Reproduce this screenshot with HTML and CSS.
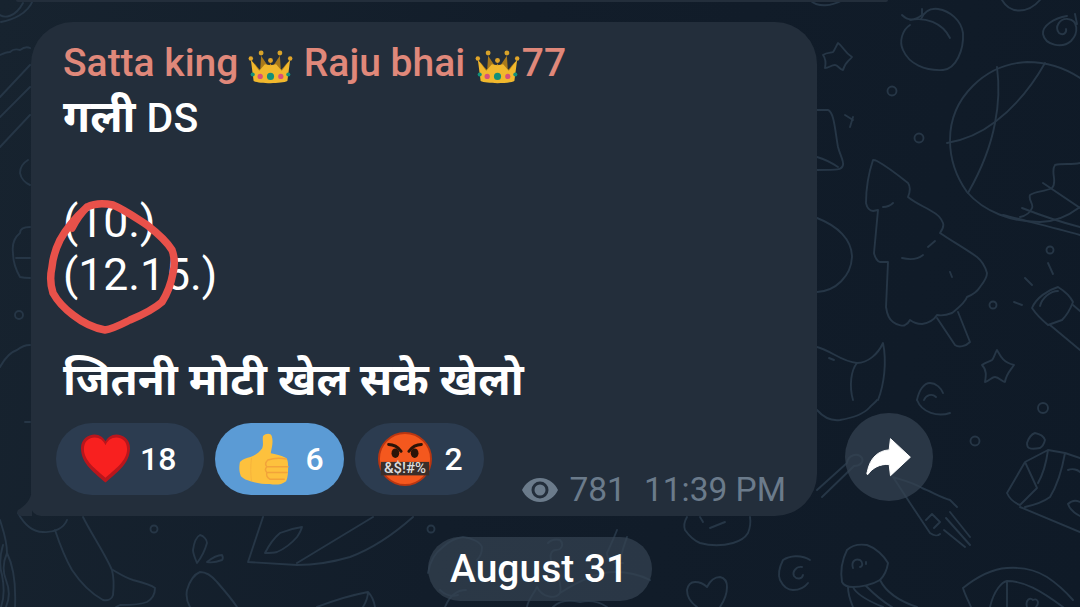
FILE: index.html
```html
<!DOCTYPE html>
<html lang="en">
<head>
  <meta charset="UTF-8" />
  <title>Channel post</title>
  <link rel="stylesheet" href="styles.css">
</head>
<body>
  <svg class="doodles" viewBox="0 0 1080 607" fill="none">
    <g stroke="#263646" stroke-width="1.9" stroke-linecap="round" stroke-linejoin="round">
      <!-- peach -->
      <path d="M910 25C902 30 899 42 903 50C909 64 925 71 943 70C956 69 964 50 963 33C961 20 950 11 938 9C930 8 924 12 921 19"/>
      <path d="M902 15C908 21 914 21 922 15L922 9M910 20C925 17 942 22 950 38"/>
      <path d="M1 22C12 20 28 14 33 0M1 0"/>
      <path d="M810 0C818 8 832 6 843 0M1 0"/>
      <path d="M1002 0C1010 14 1028 14 1040 0"/>
      <!-- spirals, top right -->
      <path d="M1067 16C1054 18 1042 26 1043 34C1045 45 1062 49 1071 41C1079 33 1078 20 1068 19C1060 18 1054 27 1059 33C1063 36 1067 33 1066 29M1075 14L1077 24"/>
      <!-- star -->
      <path d="M838 43C843 46 844 52 852 57C848 62 845 62 843 70C840 70 838 65 835 65C831 65 829 68 825 68C826 63 826 59 823 55C827 52 831 53 833 52C835 50 836 46 838 43Z"/>
      <circle cx="892" cy="91" r="4.5"/>
      <circle cx="919" cy="138" r="4.5"/>
      <!-- bell -->
      <path d="M817 110H828C834 112 835 130 838 147C840 155 844 161 843 165C842 170 838 170 817 170M817 157C824 159 832 163 838 167M845 115L853 120M850 127L853 117"/>
      <path d="M817 218C838 226 852 240 852 257C851 276 836 291 817 292"/>
      <!-- planet -->
      <path d="M1080 78C1062 66 1044 62 1027 62C985 64 950 98 950 140C950 160 957 178 967 192C984 212 1012 222 1040 222C1054 222 1068 216 1080 207"/>
      <path d="M947 143C965 140 982 132 995 122C1016 106 1032 86 1045 63"/>
      <path d="M997 67C1000 90 998 108 995 123C990 150 980 172 968 193"/>
      <path d="M1080 163C1072 165 1062 163 1055 165C1050 172 1058 182 1052 188C1044 192 1036 191 1030 195C1028 200 1034 204 1032 208C1030 213 1025 216 1020 217"/>
      <path d="M1043 183L1080 208M1022 208C1040 215 1060 222 1080 227M1003 215C1030 222 1055 228 1080 235"/>
      <!-- tree -->
      <path d="M873 160C869 172 866 188 866 203C867 208 870 211 873 211L878 210L874 253C875 258 878 262 880 262H888L886 307C887 314 890 320 893 322C898 326 904 326 905 325C907 324 909 322 910 320C914 323 918 324 922 324C928 323 934 320 937 315C942 316 947 315 952 313C958 308 965 303 967 297C972 295 977 292 980 287C984 282 987 278 987 273C985 266 982 261 977 257C966 249 950 240 940 233C943 229 944 226 943 223C941 218 937 214 933 212C925 207 915 203 908 197C910 192 911 187 908 183C898 175 888 167 877 161C875 160 874 160 873 160Z"/>
      <path d="M883 207C887 207 890 206 893 203M902 258C910 260 918 259 923 255M928 247L935 241M950 272L952 277"/>
      <path d="M937 318L955 345C959 348 966 346 970 342L958 312"/>
      <!-- dots and telescope -->
      <circle cx="1050" cy="250" r="3.5"/>
      <circle cx="993" cy="305" r="3.5"/>
      <path d="M1048 263L1053 274M1025 278L1032 285M1014 302L1022 305"/>
      <path d="M1032 308C1036 298 1048 290 1058 287C1066 292 1070 296 1073 302C1070 310 1066 316 1062 320L1048 325C1042 320 1036 314 1032 308Z"/>
      <path d="M1040 306C1042 298 1050 291 1058 291M1050 325L1080 350M1073 305L1080 311"/>
      <!-- lower star -->
      <path d="M997 350C1000 355 1002 362 1014 365C1010 371 1006 374 1005 382C1002 382 999 377 995 377C992 377 989 381 985 382C986 376 987 370 982 365C986 362 989 362 992 360C994 358 995 353 997 350Z"/>
      <!-- moon -->
      <path d="M817 347C830 350 842 362 857 363C868 363 878 354 883 343C887 362 884 385 878 400M857 363C851 370 849 386 853 400M829 358L834 360"/>
      <path d="M917 400C919 390 924 383 930 383C936 383 941 388 943 393M924 400C926 395 932 393 936 397"/>
      <!-- arcs under -->
      <path d="M817 410C824 418 832 421 840 420C852 418 864 414 870 407C873 404 876 402 877 400M917 400C922 413 938 417 950 413"/>
      <!-- bone and brush behind the button -->
      <path d="M817 490L847 463C848 455 858 452 862 458C864 462 860 466 854 466L822 497"/>
      <path d="M893 477C902 480 912 482 922 488C932 492 942 498 950 500L957 507M910 503L930 533C934 536 938 536 940 534M893 477L910 503M950 512L970 537M946 518L970 545M944 530L965 547M926 520L932 514L940 522L934 528"/>
      <!-- box on the right -->
      <path d="M1007 493L1025 462L1048 450L1065 453L1080 458M1007 493C1010 500 1015 503 1020 505L1037 488L1025 462M1020 507L1080 532M1065 453C1062 470 1058 484 1050 497C1042 503 1034 505 1025 507M1048 450C1046 465 1042 476 1038 483"/>
      <path d="M1027 443C1029 437 1032 434 1035 433C1040 434 1044 437 1045 440C1044 444 1042 447 1040 448C1035 449 1031 449 1029 448C1027 447 1027 445 1027 443Z"/>
      <circle cx="1043" cy="408" r="5"/>
      <circle cx="975" cy="441" r="4.5"/>
      <path d="M1068 470C1073 468 1078 470 1080 472M1068 504C1072 500 1076 500 1080 502M1068 504C1070 510 1076 514 1080 516"/>
      <!-- pizza -->
      <path d="M963 588C978 576 992 569 1007 568C1022 567 1036 570 1047 577C1056 583 1066 592 1073 600M963 588C965 595 968 600 971 607M990 607C994 590 1002 582 1007 581C1024 581 1040 590 1063 607M1007 581V607"/>
      <path d="M1027 607C1025 600 1030 597 1033 600C1037 598 1040 602 1036 607"/>
      <!-- jellyfish and spiral -->
      <path d="M842 582C840 570 843 558 847 550C852 545 860 544 867 545C876 548 884 556 888 563C887 570 884 576 880 580C872 585 860 587 853 587C848 587 844 586 842 582Z"/>
      <path d="M853 587C856 594 866 600 883 607M866 586C872 592 880 600 892 607M880 580C885 590 896 600 917 607M848 587C848 594 850 600 853 607"/>
      <path d="M853 568C851 562 855 558 860 560C863 562 863 566 860 567M866 562V564"/>
      <path d="M810 560C801 554 789 556 783 560C779 568 778 575 780 580C783 586 788 590 793 590C800 590 805 587 808 583M802 567C796 566 792 572 794 576C797 580 802 579 803 575"/>
      <!-- heart and hat below the bubble -->
      <path d="M697 607C690 602 687 596 687 590C688 585 691 582 695 582C700 582 704 584 707 587C710 581 715 577 720 577C725 578 727 582 727 587C727 594 724 601 720 607"/>
      <path d="M687 517C684 522 684 527 685 530C690 537 695 541 700 543C711 546 722 546 733 543C740 541 745 538 748 533C750 528 751 523 750 517M710 528L725 522M700 517L703 522"/>
      <!-- bottom left -->
      <path d="M18 513C24 524 33 532 43 532C54 533 64 528 67 520M55 530C60 545 65 558 72 570C80 582 92 594 103 600C108 601 112 599 113 595C114 586 114 578 112 570C104 552 92 535 83 517"/>
      <path d="M113 570C120 574 126 578 133 580C141 582 150 584 155 588C155 594 152 599 147 602C140 605 130 605 120 605L116 607"/>
      <circle cx="154" cy="529" r="3.5"/>
      <path d="M200 535C204 536 207 540 207 543C205 550 201 558 197 563C195 558 193 554 193 550C194 543 196 537 200 535ZM207 562C212 558 217 555 222 555C223 557 223 559 222 560C217 562 212 563 207 562Z"/>
      <path d="M190 607C186 600 186 595 187 590C190 580 195 574 200 572C206 572 212 576 217 582C224 590 231 598 237 607"/>
      <path d="M263 517L248 562L297 565C315 565 333 562 350 557C374 548 395 533 413 517M297 563C323 547 348 532 373 517"/>
      <path d="M265 553C269 545 274 538 280 533C287 530 295 528 302 527C301 531 299 534 297 537C291 544 284 549 277 552C273 553 269 553 265 553Z"/>
      <circle cx="431" cy="529" r="3.5"/>
      <path d="M317 607C335 600 352 595 368 592C372 596 374 601 375 607M368 592C368 597 366 602 363 607"/>
      <!-- left strip -->
      <path d="M0 15C4 18 15 18 23 3M0 55C4 53 7 52 10 52C13 49 17 49 20 50C24 47 28 47 30 48M0 97L30 65M0 117L30 87M0 147L30 115"/>
      <path d="M28 160C23 163 20 168 20 173C21 178 25 183 30 185"/>
      <path d="M30 227C24 227 20 229 20 233C14 238 12 246 13 253C13 262 16 270 20 277C24 278 27 278 30 278M16 258H30"/>
      <circle cx="19" cy="315" r="4"/>
      <path d="M0 367C5 358 10 352 17 350C22 346 26 345 30 345M25 422H30"/>
      <path d="M0 520C3 530 7 540 7 553C3 562 2 570 6 580C10 590 10 598 6 607M3 545C0 555 -1 565 2 575C4 585 5 596 1 607M7 553C13 565 16 585 15 607"/>
      <!-- under the date pill -->
      <path d="M428 573C430 560 436 552 443 547C449 541 456 538 463 537C472 538 480 542 482 547C482 552 480 557 477 560M440 590C445 595 452 597 458 595M445 607C450 595 458 590 466 590"/>
      <path d="M548 543C552 539 556 539 560 540C564 544 562 550 556 550C551 550 549 556 552 563C558 574 562 585 560 593C555 600 542 597 537 587C533 595 528 600 527 607M560 593C580 580 598 572 615 572C628 572 640 575 650 580"/>
      <path d="M617 530C614 538 610 546 607 553C607 560 613 564 623 563M627 537C624 545 622 552 620 560"/>
      <path d="M553 607C560 600 570 600 580 602C590 600 600 602 607 607"/>
    </g>
  </svg>

  <div class="chat">
    <div class="prev-bubble"></div>
    <div class="post-row">
      <article class="bubble">
        <div class="sender">Satta king
          <svg class="crown" viewBox="0 0 48 40"><use href="#crown"/></svg>
          Raju bhai <svg class="crown tight" viewBox="0 0 48 40"><use href="#crown"/></svg>77</div>
        <div class="text">
          <div class="line"><b>गली</b> <span class="latin">DS</span></div>
          <div class="line">&nbsp;</div>
          <div class="line">(10.)</div>
          <div class="line">(12.15.)</div>
          <div class="line">&nbsp;</div>
          <div class="line"><b>जितनी मोटी खेल सके खेलो</b></div>
        </div>

        <div class="footer">
          <div class="reactions">
            <div class="reaction heart">
              <svg class="react-icon" viewBox="0 0 52 52">
                <path d="M26 50C16 41 1 31 1 15 1 6 8 1 15 1c5 0 9 3 11 7 2-4 6-7 11-7 7 0 14 5 14 14 0 16-15 26-25 35z" fill="#b9161c"/>
                <path d="M26 45C17 37 4 28 4 16 4 8 9 4 15 4c5 0 9 3 11 8 2-5 6-8 11-8 6 0 11 4 11 12 0 12-13 21-22 29z" fill="#f8201f"/>
              </svg>
              <span>18</span>
            </div>
            <div class="reaction active">
              <svg class="react-icon" viewBox="237 432 54 54">
                <path d="M263 435C266 432 271 432 272 435C274 441 272 447 271 453C276 454 282 455 287 458C289 460 289 464 289 467C289 472 289 478 287 482C282 486 276 486 270 485C263 485 256 484 250 482C246 481 243 480 240 477C238 472 238 467 239 462C242 459 246 458 250 457C255 455 259 452 262 448C264 444 262 439 263 435Z" fill="#fdc13d"/>
                <path d="M268 460C274 458 282 458 287 459M267 467H289M267 473H288M270 480H285M268 460C265 463 265 465 267 467C265 469 265 471 267 473C266 476 267 478 270 480" fill="none" stroke="#f2a33a" stroke-width="1.5" stroke-linecap="round"/>
                <path d="M251 458C250 466 250 474 251 482" fill="none" stroke="#f6b23c" stroke-width="1"/>
              </svg>
              <span>6</span>
            </div>
            <div class="reaction grawlix">
              <svg class="react-icon face" viewBox="0 0 56 56">
                <circle cx="28" cy="28" r="27" fill="#f4581e" stroke="#bb3610" stroke-width="2"/>
                <path d="M11 13c5 0 10 3 13 7M45 13c-5 0-10 3-13 7" fill="none" stroke="#2b1408" stroke-width="3" stroke-linecap="round"/>
                <ellipse cx="18" cy="22" rx="4" ry="5" fill="#2b1408"/>
                <ellipse cx="38" cy="22" rx="4" ry="5" fill="#2b1408"/>
                <rect x="3" y="31" width="50" height="14" fill="#3a2e2a"/>
                <text x="28" y="43" text-anchor="middle" class="swear">&amp;$!#%</text>
              </svg>
              <span>2</span>
            </div>
          </div>
          <div class="meta">
            <svg class="eye" viewBox="0 0 38 26">
              <path d="M19 1C10 1 4 7 1 13c3 6 9 12 18 12s15-6 18-12C34 7 28 1 19 1z" fill="#6b7b8b"/>
              <circle cx="19" cy="13" r="8.5" fill="#232e3b"/>
              <circle cx="19" cy="13" r="5.5" fill="#6b7b8b"/>
            </svg>
            <span class="views">781</span>
            <span class="time">11:39 PM</span>
          </div>
        </div>

        <svg class="tail" viewBox="0 0 15 26"><path d="M15 0C14 10 8 16 1 20C-1 22 1 26 5 26H15Z"/></svg>

        <svg class="scribble" viewBox="40 195 145 145" fill="none">
          <path d="M72 228C76 220 81 213 87 207C95 203 104 203 113 205C125 210 136 218 147 225C156 232 166 240 172 250C175 258 175 265 173 273C171 284 167 294 162 302C153 310 142 315 130 320C122 324 113 329 105 330C93 328 82 322 73 315C65 309 58 302 53 293C50 284 50 276 52 267C53 257 56 248 60 240C66 229 76 217 87 207" stroke="#e8514a" stroke-width="7.5" stroke-linecap="round" stroke-linejoin="round"/>
        </svg>
      </article>

      <button class="share">
        <svg viewBox="1095 108 145 122"><path d="M1172 112L1232 168L1172 224L1168 190C1140 188 1118 200 1104 220C1100 222 1100 216 1102 212C1110 170 1135 148 1168 146Z" fill="#fff" stroke="#fff" stroke-width="3" stroke-linejoin="round"/></svg>
      </button>
    </div>

    <div class="date-pill">August 31</div>
  </div>

  <svg class="defs" width="0" height="0">
    <defs>
      <g id="crown">
        <path d="M4 14c4 2 6 7 9 9L14 8l8 12 2-4 2 4 8-12 1 15c3-2 5-7 9-9l-3 20H7z" fill="#a97a1a"/>
        <path d="M3 12l9 12 6-7 6 1 6-1 6 7 9-12-3 23c-6 3-30 3-36 0z" fill="#f1b82d"/>
        <circle cx="3" cy="11" r="2.4" fill="#e0a52a"/><circle cx="45" cy="11" r="2.4" fill="#e0a52a"/>
        <circle cx="14" cy="5" r="2.6" fill="#d8a32a"/><circle cx="34" cy="5" r="2.6" fill="#d8a32a"/>
        <circle cx="24" cy="13" r="2.6" fill="#e0a52a"/>
        <circle cx="24" cy="30" r="3.8" fill="#12907a"/>
        <circle cx="13" cy="30" r="2.8" fill="#d9507a"/><circle cx="35" cy="30" r="2.8" fill="#d9507a"/>
        <circle cx="5" cy="28" r="2.2" fill="#12907a"/><circle cx="43" cy="28" r="2.2" fill="#12907a"/>
      </g>
    </defs>
  </svg>
</body>
</html>
```

FILE: styles.css
```css
* {
  box-sizing: border-box;
}
html,
body {
  margin: 0;
  height: 607px;
  overflow: hidden;
}
body {
  font-family: "Roboto", "Noto Sans", "Noto Sans Devanagari", "Lohit Devanagari", sans-serif;
  background: linear-gradient(100deg, #17232f 0%, #121d2a 45%, #0f1a27 100%);
  color: #ffffff;
}
.doodles {
  position: absolute;
  top: 0;
  left: 0;
  width: 1080px;
  height: 607px;
}
.defs {
  position: absolute;
}
.chat {
  position: relative;
  display: flex;
  flex-direction: column;
  padding-left: 31px;
}
.prev-bubble {
  width: 872px;
  height: 2px;
  margin: 0 0 20px -15px;
  background: #232e3b;
  border-radius: 0 0 10px 10px;
}
.post-row {
  display: flex;
  align-items: flex-end;
  gap: 28px;
}
.bubble {
  position: relative;
  width: 786px;
  height: 494px;
  padding: 17px 32px 0;
  background: #232e3b;
  border-radius: 42px 42px 42px 10px;
}
.sender {
  font-size: 39px;
  line-height: 48px;
  font-weight: 500;
  color: #e0887a;
  white-space: nowrap;
}
.crown {
  width: 45px;
  height: 38px;
  margin-right: 1px;
  vertical-align: -10px;
}
.crown.tight {
  margin-right: 2px;
}
.text {
  margin-top: 4px;
  font-size: 44.5px;
  line-height: 52.5px;
}
.line {
  height: 52.5px;
  white-space: nowrap;
}
.line b {
  font-size: 44px;
  font-weight: 700;
}
.latin {
  font-size: 41px;
  font-weight: 500;
}
.footer {
  position: absolute;
  left: 25px;
  right: 31px;
  bottom: 21px;
  display: flex;
  justify-content: space-between;
  align-items: flex-end;
}
.reactions {
  display: flex;
  gap: 11px;
}
.reaction {
  display: flex;
  align-items: center;
  gap: 15px;
  height: 72px;
  padding: 0 20px 0 23px;
  border-radius: 36px;
  background: #2c3c50;
  font-size: 32px;
  font-weight: 500;
}
.reaction.heart {
  gap: 9px;
  padding-right: 28px;
  padding-left: 24px;
}
.reaction.grawlix {
  gap: 13px;
  padding-right: 21px;
}
.reaction.active {
  background: #5b9bd5;
}
.react-icon {
  width: 52px;
  height: 52px;
}
.heart .react-icon {
  width: 51px;
}
.face {
  width: 54px;
  height: 54px;
}
.swear {
  font-family: "Roboto", sans-serif;
  font-size: 15.5px;
  font-weight: 500;
  fill: #dddddd;
}
.meta {
  display: flex;
  align-items: center;
  font-size: 33.5px;
  color: #6b7b8b;
  gap: 10px;
  margin-bottom: -14px;
}
.eye {
  width: 38px;
  height: 26px;
}
.time {
  margin-left: 8px;
}
.tail {
  position: absolute;
  left: -14px;
  bottom: 0;
  width: 15px;
  height: 26px;
  fill: #232e3b;
}
.scribble {
  position: absolute;
  left: 9px;
  top: 173px;
  width: 145px;
  height: 145px;
}
.share {
  width: 88px;
  height: 88px;
  margin-bottom: 15px;
  padding: 0;
  display: flex;
  align-items: center;
  justify-content: center;
  border: none;
  border-radius: 50%;
  background: rgba(52, 66, 82, 0.72);
}
.share svg {
  width: 48px;
  height: 41px;
}
.date-pill {
  align-self: flex-start;
  margin: 21px 0 0 397px;
  height: 64px;
  padding: 0 24px 0 22px;
  border-radius: 32px;
  background: rgba(52, 66, 82, 0.72);
  font-size: 39px;
  line-height: 64px;
  font-weight: 500;
}
```
